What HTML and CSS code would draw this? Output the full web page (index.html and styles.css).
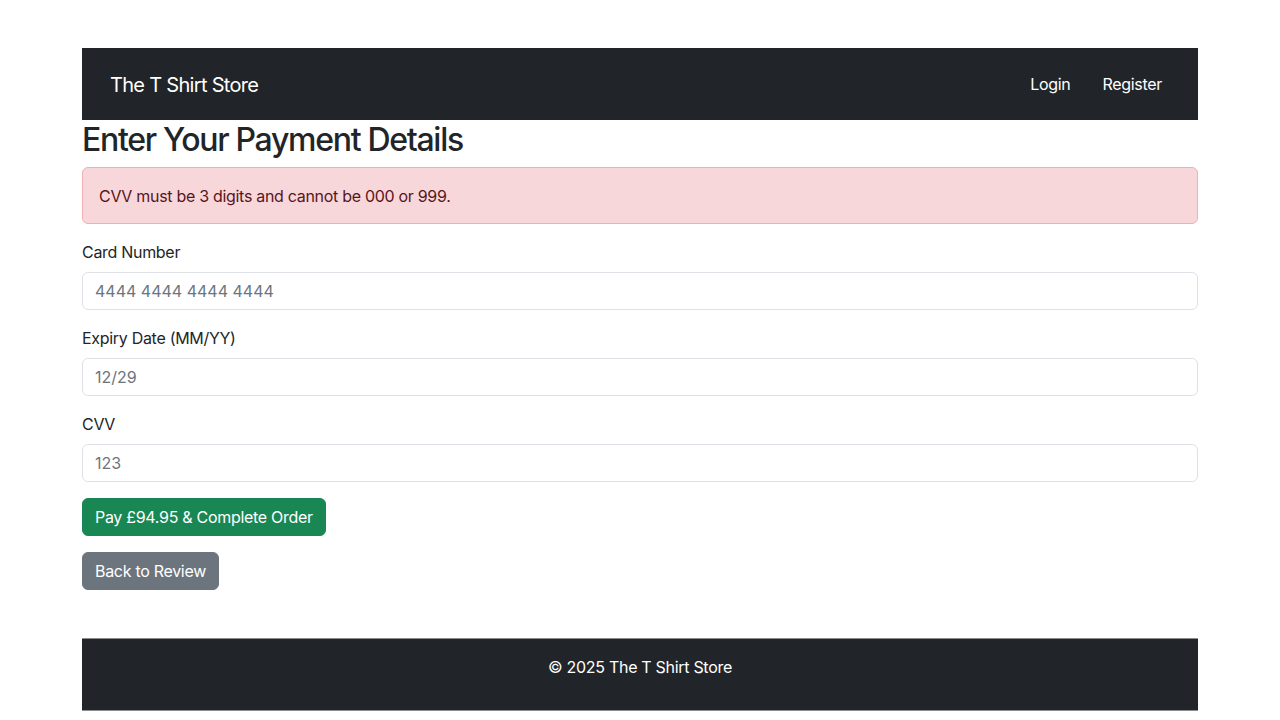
FILE: index.html
```html
<!DOCTYPE html>
<html lang="en">
<head>
<meta charset="utf-8">
<title>Payment - The T Shirt Store</title>
<link rel="stylesheet" href="styles.css">
</head>
<body>
<div class="container">
  <nav class="navbar">
    <a class="brand" href="#">The T Shirt Store</a>
    <ul class="nav">
      <li><a class="nav-link" href="#">Login</a></li>
      <li><a class="nav-link" href="#">Register</a></li>
    </ul>
  </nav>
  <main>
    <h2 class="title">Enter Your Payment Details</h2>
    <div class="alert">CVV must be 3 digits and cannot be 000 or 999.</div>
    <form class="form">
      <div class="field">
        <label class="label" for="card">Card Number</label>
        <input class="input" id="card" type="text" placeholder="4444 4444 4444 4444">
      </div>
      <div class="field">
        <label class="label" for="exp">Expiry Date (MM/YY)</label>
        <input class="input" id="exp" type="text" placeholder="12/29">
      </div>
      <div class="field">
        <label class="label" for="cvv">CVV</label>
        <input class="input" id="cvv" type="text" placeholder="123">
      </div>
      <div class="actions">
        <button class="btn btn-success" type="button">Pay £94.95 &amp; Complete Order</button>
        <a class="btn btn-secondary" href="#">Back to Review</a>
      </div>
    </form>
  </main>
  <footer class="footer">
    <p>© 2025 The T Shirt Store</p>
  </footer>
</div>
</body>
</html>
```
FILE: styles.css
```css
* { box-sizing: border-box; }
html, body { margin: 0; padding: 0; }
body {
  font-family: Inter, "Noto Sans", "Liberation Sans", sans-serif;
  font-size: 16px;
  line-height: 1.5;
  letter-spacing: -0.3px;
  color: #212529;
  background: #fff;
}
.container {
  width: 1140px;
  margin: 0 auto;
  padding: 48px 12px 0;
}
.navbar {
  background: #212529;
  height: 72px;
  display: flex;
  align-items: center;
  justify-content: space-between;
  padding: 0 28px;
}
.brand {
  color: #fff;
  text-decoration: none;
  font-size: 20px;
  line-height: 30px;
  letter-spacing: -0.7px;
  padding-top: 2px;
}
.nav {
  list-style: none;
  margin: 0;
  padding: 0;
  display: flex;
  gap: 16px;
}
.nav-link {
  display: block;
  color: #fff;
  text-decoration: none;
  font-size: 16px;
  padding: 8px;
}
.title {
  font-size: 32px;
  font-weight: 500;
  line-height: 38px;
  margin: 0 0 8px;
  padding-top: 1px;
  letter-spacing: -1.3px;
}
.alert {
  background: #f8d7da;
  border: 1px solid #f1aeb5;
  color: #58151c;
  border-radius: 6px;
  padding: 16px;
  height: 57px;
  margin-bottom: 16px;
}
.form { margin: 0; }
.field { margin-bottom: 16px; }
.label {
  display: block;
  margin-bottom: 8px;
}
.input {
  display: block;
  width: 100%;
  height: 38px;
  padding: 6px 12px;
  font: inherit;
  letter-spacing: 0;
  color: #212529;
  border: 1px solid #dee2e6;
  border-radius: 6px;
  background: #fff;
}
.input::placeholder { color: #6c757d; opacity: 1; }
.actions {
  display: flex;
  flex-direction: column;
  align-items: flex-start;
  gap: 16px;
}
.btn {
  display: inline-block;
  font: inherit;
  letter-spacing: -0.3px;
  line-height: 24px;
  padding: 6px 12px;
  border-radius: 6px;
  border: 1px solid transparent;
  color: #fff;
  text-decoration: none;
  cursor: pointer;
}
.btn-success { background: #198754; border-color: #198754; }
.btn-secondary { background: #6c757d; border-color: #6c757d; }
.footer {
  margin-top: 48px;
  background: #212529;
  color: #fff;
  text-align: center;
  padding: 16px 0 0;
  height: 73px;
  border-top: 1px solid #8a8c8e;
  border-bottom: 1px solid #8a8c8e;
}
.footer p { margin: 0 0 16px; }
```
